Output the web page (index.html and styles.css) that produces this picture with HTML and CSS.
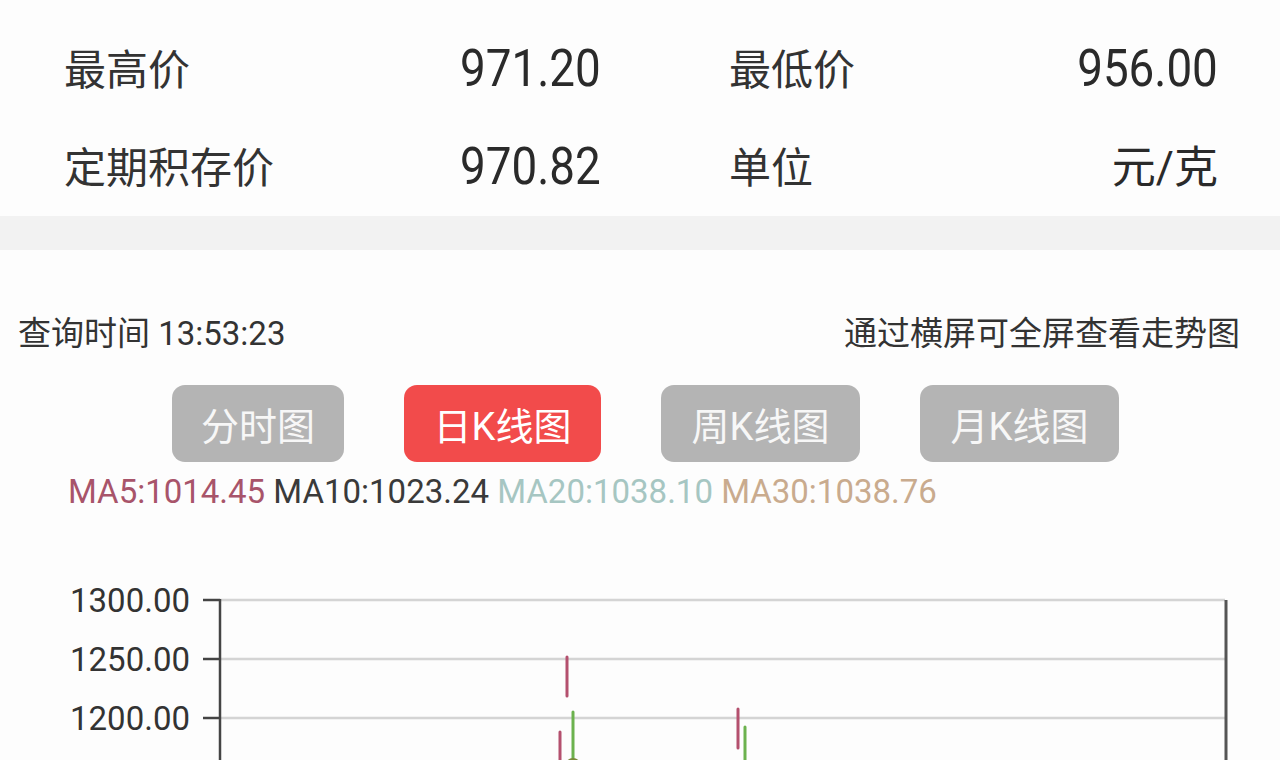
FILE: index.html
```html
<!DOCTYPE html>
<html lang="zh">
<head>
<meta charset="utf-8">
<title>行情</title>
<link rel="stylesheet" href="styles.css">
</head>
<body>
<section class="info">
  <div class="cell left">
    <span class="label">最高价</span>
    <span class="value">971.20</span>
  </div>
  <div class="cell right">
    <span class="label">最低价</span>
    <span class="value">956.00</span>
  </div>
  <div class="cell left">
    <span class="label">定期积存价</span>
    <span class="value">970.82</span>
  </div>
  <div class="cell right">
    <span class="label">单位</span>
    <span class="unit">元/克</span>
  </div>
</section>
<div class="band"></div>
<div class="query">
  <span>查询时间 13:53:23</span>
  <span>通过横屏可全屏查看走势图</span>
</div>
<div class="tabs">
  <div class="tab">分时图</div>
  <div class="tab active">日K线图</div>
  <div class="tab">周K线图</div>
  <div class="tab">月K线图</div>
</div>
<div class="ma">
  <span class="ma5">MA5:1014.45</span>
  <span class="ma10">MA10:1023.24</span>
  <span class="ma20">MA20:1038.10</span>
  <span class="ma30">MA30:1038.76</span>
</div>
<svg class="chart" width="1280" height="248" viewBox="0 0 1280 248" xmlns="http://www.w3.org/2000/svg">
  <g class="grid" stroke="#d4d4d4" stroke-width="2.5">
    <line x1="220" y1="88" x2="1225" y2="88"/>
    <line x1="220" y1="147" x2="1225" y2="147"/>
    <line x1="220" y1="206" x2="1225" y2="206"/>
  </g>
  <g stroke="#444" stroke-width="2.5">
    <line x1="220" y1="87" x2="220" y2="248"/>
    <line x1="203" y1="88" x2="220" y2="88"/>
    <line x1="203" y1="147" x2="220" y2="147"/>
    <line x1="203" y1="206" x2="220" y2="206"/>
    <line x1="1226" y1="88" x2="1226" y2="248" stroke="#555" stroke-width="3"/>
  </g>
  <g class="ylab" fill="#333" font-size="33" text-anchor="end">
    <text x="190" y="100">1300.00</text>
    <text x="190" y="159">1250.00</text>
    <text x="190" y="218">1200.00</text>
  </g>
  <g stroke-width="3" stroke-linecap="round">
    <line x1="567" y1="145" x2="567" y2="184" stroke="#b4506e"/>
    <line x1="560" y1="220" x2="560" y2="248" stroke="#b4506e"/>
    <line x1="573" y1="200" x2="573" y2="248" stroke="#6cb24e"/>
    <line x1="738" y1="197" x2="738" y2="236" stroke="#b4506e"/>
    <line x1="745" y1="215" x2="745" y2="248" stroke="#6cb24e"/>
  </g>
  <circle cx="573" cy="254" r="8" fill="#7a8a3a"/>
</svg>
</body>
</html>
```

FILE: styles.css
```css
html, body {
  margin: 0;
  padding: 0;
  background: #fdfdfd;
  overflow: hidden;
  width: 1280px;
  height: 760px;
}
body {
  font-family: Roboto, "Noto Sans CJK SC", sans-serif;
  color: #2e2e2e;
}
.info {
  display: grid;
  grid-template-columns: 536px 489px;
  grid-auto-rows: 98px;
  column-gap: 129px;
  padding: 17px 0 0 64px;
  height: 199px;
}
.cell {
  display: flex;
  align-items: center;
}
.cell.right {
  justify-content: space-between;
}
.label {
  flex: none;
  font-size: 42px;
  color: #333;
  font-family: "Noto Sans CJK SC", sans-serif;
}
.cell.left .label {
  width: 396px;
}
.value {
  flex: none;
  display: inline-block;
  font-size: 52px;
  color: #2a2a2a;
  margin-top: 4px;
  transform: scaleX(0.88);
  transform-origin: left center;
}
.cell.right .value {
  transform-origin: right center;
}
.unit {
  font-size: 44px;
  color: #2a2a2a;
  font-family: Roboto, "Noto Sans CJK SC", sans-serif;
}
.band {
  height: 34px;
  background: #f2f2f2;
}
.query {
  display: flex;
  justify-content: space-between;
  align-items: center;
  height: 40px;
  margin-top: 61px;
  padding: 0 40px 0 18px;
  font-size: 33px;
  color: #333;
}
.tabs {
  display: flex;
  justify-content: center;
  gap: 60px;
  margin-top: 34px;
  padding-left: 11px;
}
.tab {
  height: 77px;
  width: 172px;
  border-radius: 13px;
  background: #b4b4b4;
  color: #f7f7f7;
  font-size: 38px;
  display: flex;
  align-items: center;
  justify-content: center;
}
.tab:nth-child(2) { width: 197px; }
.tab:nth-child(3), .tab:nth-child(4) { width: 199px; }
.tab.active {
  background: #f24b4b;
  color: #fff;
}
.ma {
  margin-top: 10px;
  height: 40px;
  line-height: 40px;
  padding-left: 68px;
  font-size: 33px;
  white-space: nowrap;
}
.ma5 { color: #a8546a; }
.ma10 { color: #3a3a3a; }
.ma20 { color: #a6c6c2; }
.ma30 { color: #c9ab8e; }
.chart {
  display: block;
  font-family: Roboto, sans-serif;
}
```
